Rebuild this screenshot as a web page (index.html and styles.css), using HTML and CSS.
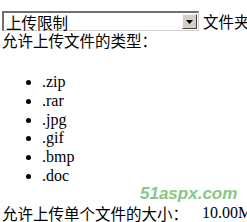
FILE: index.html
```html
<!DOCTYPE html>
<html>
<head>
<meta charset="utf-8">
<link rel="stylesheet" href="styles.css">
</head>
<body>
<div class="page">
  <div class="row-select">
    <div class="select">
      <span class="select-text">上传限制</span>
      <span class="select-btn"><svg width="7" height="4" viewBox="0 0 7 4"><path d="M0 0H7L3.5 4Z" fill="#000"/></svg></span>
    </div>
    <span class="folder">文件夹</span>
  </div>
  <div class="label">允许上传文件的类型：</div>
  <ul class="types">
    <li>.zip</li>
    <li>.rar</li>
    <li>.jpg</li>
    <li>.gif</li>
    <li>.bmp</li>
    <li>.doc</li>
  </ul>
  <div class="label size-row"><span>允许上传单个文件的大小：</span><span class="size">10.00M</span></div>
  <div class="watermark">51aspx.com</div>
</div>
</body>
</html>
```
FILE: styles.css
```css
html, body {
  margin: 0;
  padding: 0;
  background: #fff;
  overflow: hidden;
}
.page {
  position: relative;
  padding: 11px 0 0 2px;
  font-family: "Noto Sans CJK SC", sans-serif;
  font-size: 15.5px;
  color: #000;
  white-space: nowrap;
  width: 400px;
  height: 222px;
}
.row-select {
  display: flex;
  align-items: center;
  height: 20px;
}
.select {
  box-sizing: border-box;
  width: 197px;
  height: 20px;
  display: flex;
  align-items: center;
  background: #fff;
  border-top: 2px solid #6f6f6f;
  border-left: 2px solid #6f6f6f;
  border-bottom: 1px solid #d4d0c8;
  border-right: 1px solid #d4d0c8;
  padding: 1px;
}
.select-text {
  flex: 1;
  font-size: 15.5px;
  line-height: 16px;
  padding-left: 1px;
}
.select-btn {
  box-sizing: border-box;
  width: 15px;
  height: 15px;
  background: #d4d0c8;
  border-top: 1px solid #f4f4f4;
  border-left: 1px solid #f4f4f4;
  border-right: 1px solid #404040;
  border-bottom: 1px solid #404040;
  display: flex;
  align-items: center;
  justify-content: center;
}
.folder {
  margin-left: 4px;
  line-height: 18px;
}
.label {
  line-height: 18px;
}
.types {
  margin: 24px 0 18px 0;
  padding-left: 40px;
  font-family: "Liberation Serif", serif;
  font-size: 16px;
}
.types li {
  line-height: 18.8px;
}
.size-row {
  display: flex;
}
.size {
  margin-left: 14px;
  font-family: "Liberation Serif", serif;
  font-size: 16px;
}
.watermark {
  position: absolute;
  left: 140px;
  top: 185px;
  font-family: "Liberation Sans", sans-serif;
  font-weight: bold;
  font-style: italic;
  font-size: 17px;
  line-height: 17px;
  color: #86c886;
}
```
